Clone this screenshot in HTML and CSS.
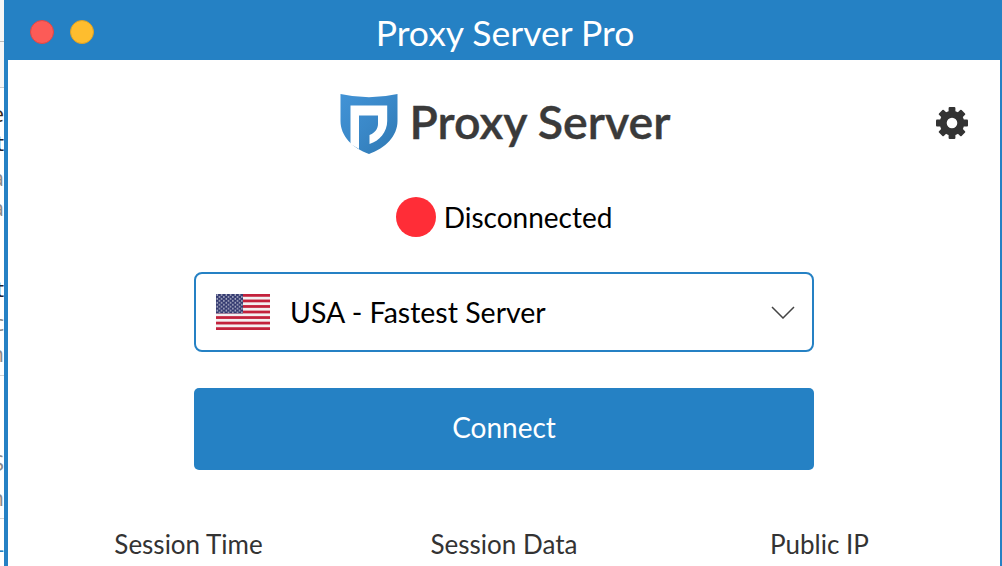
FILE: index.html
```html
<!DOCTYPE html>
<html lang="en">
<head>
  <meta charset="UTF-8">
  <title>Proxy Server Pro</title>
  <link rel="stylesheet" href="styles.css">
</head>

<body>
<!-- what shows of the page behind the window -->
<div class="behind">
  <div class="behind-top"></div>
  <i class="rule rule-1"></i>
  <i class="rule rule-2"></i>
  <i class="rule rule-3"></i>
  <i class="rule rule-4"></i>
  <span class="frag frag-orange">e</span>
  <span class="frag frag-dark frag-t1">t</span>
  <span class="frag frag-grey frag-a">a</span>
  <span class="frag frag-grey frag-b">a</span>
  <span class="frag frag-dark frag-t2">t</span>
  <span class="frag frag-grey frag-c">c</span>
  <span class="frag frag-grey frag-d">n</span>
  <span class="frag frag-grey frag-e">S</span>
  <span class="frag frag-grey frag-f">n</span>
  <span class="frag frag-blue">-</span>
</div>

<div class="window">
  <header class="titlebar">
    <div class="lights">
      <span class="light light-red"></span>
      <span class="light light-yellow"></span>
    </div>
    <h1>Proxy Server Pro</h1>
  </header>

  <main class="content">
    <div class="brand-row">
      <div class="brand">
        <svg class="shield" viewBox="0 0 57 60" width="58" height="60">
          <defs>
            <linearGradient id="shieldFill" x1="0" y1="0" x2="1" y2="1">
              <stop offset="0" stop-color="#4293d6"/>
              <stop offset="0.5" stop-color="#3a88c8"/>
              <stop offset="1" stop-color="#2f78b2"/>
            </linearGradient>
          </defs>
          <path fill="url(#shieldFill)" d="M0 0Q28.5 6.5 57 0V27C57 42 45 54 28.5 60C12 54 0 42 0 27Z"/>
          <path fill="#fff" d="M10 11.5H46.7V27C46.7 38 39 47 29 50V41C34 39 37.5 35 37.5 30V21.5H18.5V55L10 50Z"/>
        </svg>
        <span class="brand-name">Proxy Server</span>
      </div>
      <button class="gear" aria-label="Settings">
        <svg viewBox="0 0 32 32" width="32" height="32" fill="#333">
          <circle cx="16" cy="16" r="8.8" fill="none" stroke="#333" stroke-width="7"/>
          <rect x="12.6" y="0" width="6.8" height="6" rx="1"/>
          <rect x="12.6" y="0" width="6.8" height="6" rx="1" transform="rotate(45 16 16)"/>
          <rect x="12.6" y="0" width="6.8" height="6" rx="1" transform="rotate(90 16 16)"/>
          <rect x="12.6" y="0" width="6.8" height="6" rx="1" transform="rotate(135 16 16)"/>
          <rect x="12.6" y="0" width="6.8" height="6" rx="1" transform="rotate(180 16 16)"/>
          <rect x="12.6" y="0" width="6.8" height="6" rx="1" transform="rotate(225 16 16)"/>
          <rect x="12.6" y="0" width="6.8" height="6" rx="1" transform="rotate(270 16 16)"/>
          <rect x="12.6" y="0" width="6.8" height="6" rx="1" transform="rotate(315 16 16)"/>
        </svg>
      </button>
    </div>

    <div class="status">
      <span class="status-dot"></span>
      <span>Disconnected</span>
    </div>

    <div class="select">
      <svg class="flag" viewBox="0 0 54 36" width="54" height="36">
        <defs>
          <pattern id="stars" width="4.5" height="3.9" patternUnits="userSpaceOnUse">
            <circle cx="1.2" cy="1" r="0.75" fill="#fff"/>
            <circle cx="3.45" cy="2.95" r="0.75" fill="#fff"/>
          </pattern>
        </defs>
        <rect width="54" height="36" fill="#f3f0f2"/>
        <g fill="#c3213c">
          <rect y="0" width="54" height="2.77"/>
          <rect y="5.54" width="54" height="2.77"/>
          <rect y="11.08" width="54" height="2.77"/>
          <rect y="16.62" width="54" height="2.77"/>
          <rect y="22.15" width="54" height="2.77"/>
          <rect y="27.69" width="54" height="2.77"/>
          <rect y="33.23" width="54" height="2.77"/>
        </g>
        <rect width="27" height="19.4" fill="#343a70"/>
        <rect width="27" height="19.4" fill="url(#stars)"/>
      </svg>
      <span class="select-label">USA - Fastest Server</span>
      <svg class="chevron" viewBox="0 0 24 13" width="24" height="13">
        <path d="M1 1L12 12L23 1" fill="none" stroke="#444" stroke-width="1.5"/>
      </svg>
    </div>

    <button class="connect">Connect</button>

    <div class="stats">
      <div>Session Time</div>
      <div>Session Data</div>
      <div>Public IP</div>
    </div>
  </main>
</div>
</body>
</html>
```

FILE: styles.css
```css
html, body {
  margin: 0;
  height: 100%;
  overflow: hidden;
}

body {
  display: flex;
  background: #fff;
  font-family: "Lato", "Liberation Sans", sans-serif;
  color: #000;
}

/* left sliver of the page behind the window */
.behind {
  position: relative;
  flex: 0 0 4px;
  overflow: hidden;
  background: #fff;
}

.behind-top {
  height: 87px;
  background: #f6f6f6;
}

.rule {
  position: absolute;
  left: 0;
  width: 4px;
  height: 1px;
  background: #d4d4d4;
}
.rule-1 { top: 41px; background: #bbb; }
.rule-2 { top: 87px; background: #ccc; }
.rule-3 { top: 375px; }
.rule-4 { top: 518px; }

.frag {
  position: absolute;
  right: 0;
  font-size: 22px;
  line-height: 20px;
  font-family: "Open Sans", sans-serif;
}
.frag-orange { top: 103px; color: #3a2a1a; }
.frag-dark { color: #1d2433; }
.frag-grey { color: #8a8a8a; }
.frag-t1 { top: 132px; }
.frag-a { top: 167px; }
.frag-b { top: 197px; }
.frag-t2 { top: 278px; }
.frag-c { top: 312px; }
.frag-d { top: 343px; }
.frag-e { top: 452px; }
.frag-f { top: 487px; }
.frag-blue { top: 538px; color: #2581c4; }

/* app window */
.window {
  flex: 1;
  display: flex;
  flex-direction: column;
  box-sizing: border-box;
  min-width: 0;
  border-left: 4px solid #2581c4;
  border-right: 2px solid #2581c4;
}

.titlebar {
  position: relative;
  flex: 0 0 60px;
  margin-left: -4px;
  margin-right: -2px;
  display: flex;
  align-items: center;
  justify-content: center;
  background: #2581c4;
}

.titlebar h1 {
  margin: 0;
  padding: 8px 0 4px 4px;
  font-size: 35.5px;
  font-weight: 400;
  color: #fff;
}

.lights {
  position: absolute;
  left: 26px;
  top: 20px;
  display: flex;
  gap: 16px;
}

.light {
  width: 24px;
  height: 24px;
  box-sizing: border-box;
  border-radius: 50%;
}
.light-red { background: #fc5b57; border: 1px solid #df4744; }
.light-yellow { background: #febd2e; border: 1px solid #dea123; }

.content {
  display: flex;
  flex-direction: column;
  align-items: center;
  padding-top: 34px;
}

/* logo row, gear hangs on the right */
.brand-row {
  position: relative;
  align-self: stretch;
  display: flex;
  justify-content: center;
  height: 60px;
}

.brand {
  display: flex;
  align-items: center;
  gap: 12px;
  margin-left: 2px;
}

.brand-name {
  padding-bottom: 6px;
  font-size: 46.5px;
  font-weight: 600;
  color: #3a3a3a;
  -webkit-text-stroke: 0.4px #3a3a3a;
}

.gear {
  position: absolute;
  right: 32px;
  top: 13px;
  padding: 0;
  border: 0;
  background: none;
  line-height: 0;
}

.status {
  display: flex;
  align-items: center;
  gap: 8px;
  margin-top: 43px;
  font-size: 28px;
}

.status-dot {
  width: 40px;
  height: 40px;
  border-radius: 50%;
  background: #ff2d37;
}

.select {
  display: flex;
  align-items: center;
  box-sizing: border-box;
  width: 620px;
  height: 80px;
  margin-top: 35px;
  padding: 0 18px 0 20px;
  border: 2px solid #2581c4;
  border-radius: 8px;
}

.select-label {
  flex: 1;
  margin-left: 20px;
  font-size: 28.5px;
}

.chevron {
  margin-right: -1px;
}

.connect {
  width: 620px;
  height: 82px;
  margin-top: 36px;
  padding-bottom: 6px;
  border: 0;
  border-radius: 5px;
  background: #2581c4;
  color: #fff;
  font-family: inherit;
  font-size: 28px;
}

.stats {
  display: grid;
  grid-template-columns: repeat(3, 315.5px);
  margin-top: 58px;
  font-size: 26px;
  color: #333;
  text-align: center;
}
```
